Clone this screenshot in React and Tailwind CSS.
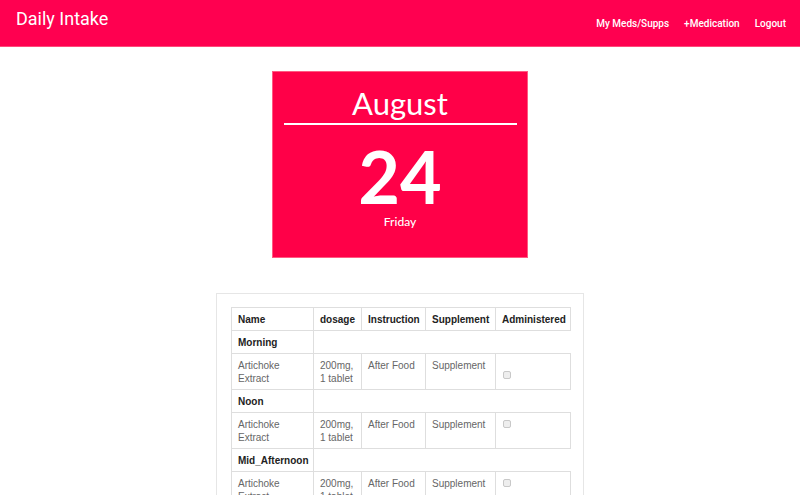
import React from "react";

const groups = [
  { label: "Morning", checkTop: true },
  { label: "Noon" },
  { label: "Mid_Afternoon" },
];

const App = () => {
  return (
    <div className="min-h-screen bg-white" style={{ fontFamily: "Roboto, 'Liberation Sans', sans-serif" }}>
      {/* Navbar */}
      <header className="flex justify-between items-start h-[47px] bg-[#ff0050] border-b border-[#ff4a7a] pl-4 pr-[14px]">
        <div className="text-white text-[18px] pt-[8px] leading-[22px]">Daily Intake</div>
        <nav className="flex gap-[15px] text-[10px] text-white pt-[17px] leading-[13px] font-medium">
          <span className="cursor-pointer">My Meds/Supps</span>
          <span className="cursor-pointer">+Medication</span>
          <span className="cursor-pointer">Logout</span>
        </nav>
      </header>

      {/* Calendar card */}
      <div
        className="mx-auto mt-[24px] w-[256px] h-[187px] bg-[#ff0048] border border-[#ff5a82] text-white flex flex-col items-center"
        style={{ fontFamily: "Lato, 'Open Sans', sans-serif" }}
      >
        <div className="text-[31px] leading-[36px] mt-[13px]">August</div>
        <div className="w-[233px] h-[2px] bg-white mt-[2px]"></div>
        <div className="text-[72px] leading-[72px] font-bold mt-[15px]">24</div>
        <div className="text-[12px] leading-[14px] mt-[3px] font-medium">Friday</div>
      </div>

      {/* Table */}
      <div className="mx-auto mt-[35px] w-[368px] border border-[#e6e6e6] pt-[13px] px-[14px] pb-[14px]">
        <table
          className="w-[339px] border-collapse text-[10px] table-fixed"
          style={{ fontFamily: "'Liberation Sans', Arial, sans-serif" }}
        >
          <colgroup>
            <col className="w-[82px]" />
            <col className="w-[48px]" />
            <col className="w-[64px]" />
            <col className="w-[70px]" />
            <col className="w-[75px]" />
          </colgroup>
          <thead>
            <tr className="h-[23px] text-[#222]">
              <th className="border border-[#dedede] text-left font-bold px-[6px]">Name</th>
              <th className="border border-[#dedede] text-left font-bold px-[6px]">dosage</th>
              <th className="border border-[#dedede] text-left font-bold px-[6px]">Instruction</th>
              <th className="border border-[#dedede] text-left font-bold px-[6px]">Supplement</th>
              <th className="border border-[#dedede] text-left font-bold px-[6px]">Administered</th>
            </tr>
          </thead>
          <tbody>
            {groups.map((g) => (
              <React.Fragment key={g.label}>
                <tr className="h-[23px]">
                  <td className="border border-[#dedede] font-bold text-[#222] px-[6px]">{g.label}</td>
                </tr>
                <tr className="h-[36px] text-[#666] align-top leading-[13px]">
                  <td className="border border-[#dedede] px-[6px] pt-[5px]">
                    Artichoke
                    <br />
                    Extract
                  </td>
                  <td className="border border-[#dedede] px-[6px] pt-[5px]">
                    200mg,
                    <br />1 tablet
                  </td>
                  <td className="border border-[#dedede] px-[6px] pt-[5px]">After Food</td>
                  <td className="border border-[#dedede] px-[6px] pt-[5px]">Supplement</td>
                  <td className="border border-[#dedede] px-[6px] pt-[5px]">
                    <div
                      className={`w-[8px] h-[8px] rounded-[2px] border border-[#c8c8c8] bg-[#eeeeee] ml-[1px] ${
                        g.checkTop ? "mt-[12px]" : "mt-[2px]"
                      }`}
                    ></div>
                  </td>
                </tr>
              </React.Fragment>
            ))}
          </tbody>
        </table>
      </div>
    </div>
  );
};

export default App;
